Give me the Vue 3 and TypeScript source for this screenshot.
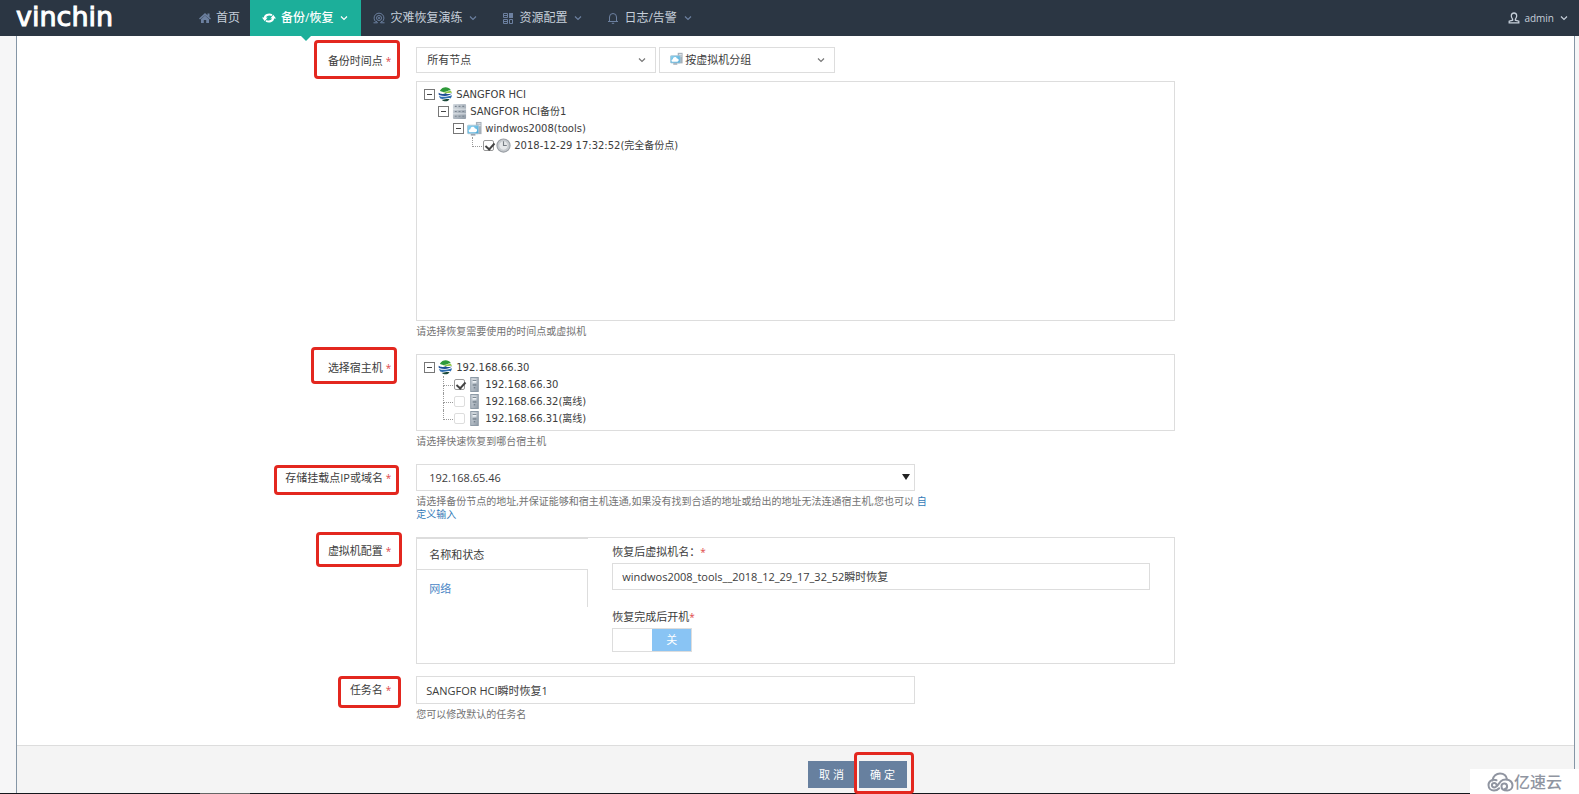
<script setup lang="ts">
import { ref } from 'vue'

interface NavItem {
  icon: string
  text: string
  active?: boolean
  menu?: boolean
}

interface TreeNode {
  level: number
  icon: string
  text: string
  open?: boolean
  checked?: boolean
  disabled?: boolean
  last?: boolean
}

const nav: NavItem[] = [
  { icon: 'home', text: '首页' },
  { icon: 'sync', text: '备份/恢复', active: true, menu: true },
  { icon: 'drill', text: '灾难恢复演练', menu: true },
  { icon: 'blocks', text: '资源配置', menu: true },
  { icon: 'bell', text: '日志/告警', menu: true },
]

const points = ref<TreeNode[]>([
  { level: 0, icon: 'globe', text: 'SANGFOR HCI', open: true },
  { level: 1, icon: 'rack', text: 'SANGFOR HCI备份1', open: true },
  { level: 2, icon: 'vm', text: 'windwos2008(tools)', open: true },
  { level: 3, icon: 'clock', text: '2018-12-29 17:32:52(完全备份点)', checked: true, last: true },
])

const hosts = ref<TreeNode[]>([
  { level: 0, icon: 'globe', text: '192.168.66.30', open: true },
  { level: 1, icon: 'server', text: '192.168.66.30', checked: true },
  { level: 1, icon: 'server', text: '192.168.66.32(离线)', checked: false, disabled: true },
  { level: 1, icon: 'server', text: '192.168.66.31(离线)', checked: false, disabled: true, last: true },
])

const vmName = ref('windwos2008_tools__2018_12_29_17_32_52瞬时恢复')
const taskName = ref('SANGFOR HCI瞬时恢复1')
const powerOn = ref(false)
const tab = ref('name')
</script>

<template>
  <div class="page">
    <svg class="defs" width="0" height="0" aria-hidden="true">
      <defs>
        <linearGradient id="metal" x1="0" y1="0" x2="1" y2="1">
          <stop offset="0" stop-color="#d5dbe1" />
          <stop offset="1" stop-color="#8f9aa6" />
        </linearGradient>
        <linearGradient id="sky" x1="0" y1="0" x2="1" y2="1">
          <stop offset="0" stop-color="#8fd3f0" />
          <stop offset="1" stop-color="#4aa8d8" />
        </linearGradient>
        <symbol id="home" viewBox="0 0 12 12">
          <path fill="currentColor" d="M6 1 12 6.500 11 7.500 6 3.200 1 7.500 0 6.500zM8.500 1.500h2v3.500l-2-1.800zM6 3.600l4 3.600V11H7.200V8H4.800v3H2V7.200z" />
        </symbol>
        <symbol id="sync" viewBox="0 0 14 12">
          <path fill="none" stroke="currentColor" stroke-width="2" d="M2.800 6.500C2.600 3.200 6.500 1.600 10 3.200M11.200 5.500c.2 3.300-3.700 4.900-7.200 3.300" />
          <path fill="currentColor" d="M0 5.500h5.600L2.800 9.200zM14 6.500H8.400l2.800-3.700z" />
        </symbol>
        <symbol id="drill" viewBox="0 0 12 12">
          <g fill="none" stroke="currentColor">
            <path d="M2.600 9.600a4.900 4.900 0 1 1 6.800 0M.5 10.800h4L3 9M11.500 10.800h-4L9 9" />
            <circle cx="6" cy="6" r="2.500" />
          </g>
          <circle cx="6" cy="6" r="1" fill="currentColor" />
        </symbol>
        <symbol id="blocks" viewBox="0 0 12 12">
          <path fill="none" stroke="currentColor" d="M1.500 1.500h4v4h-4zM1.500 7.500h4v4h-4zM7.500 7.500h3v4h-3z" />
          <path fill="currentColor" d="M7 1h4v5H7zM2 3h3v1H2zM2 9h3v1H2z" />
        </symbol>
        <symbol id="bell" viewBox="0 0 12 12">
          <path fill="none" stroke="currentColor" d="M1 9.500h10M2.500 9.500V5a3.500 3.500 0 0 1 7 0v4.500M4.800 11.300h2.400" />
        </symbol>
        <symbol id="user" viewBox="0 0 12 12">
          <path fill="none" stroke="currentColor" stroke-width="1.300" d="M4.600 7.200C2.400 4.600 3 1 6 1s3.600 3.600 1.400 6.200v1l3.400 1v1.600H1.200V9.200l3.400-1z" />
        </symbol>
        <symbol id="chevron" viewBox="0 0 8 8">
          <path fill="none" stroke="currentColor" stroke-width="1.200" d="M1 2.500 4 5.500 7 2.500" />
        </symbol>
        <symbol id="globe" viewBox="0 0 16 16">
          <path fill="#2f9a3a" d="M2 4C5-.8 11-.6 13.800 3.400 10.800 3 8.600 5.600 5.600 5.200 4.200 5 3 5 2 4z" />
          <path fill="#1d4f96" d="M.6 6.200C4.600 8.600 6.500 6.800 9 6.300c-1 1.200.3 1.700 6.200.7-4.500 3-8.500 3.200-14.300 1.400z" />
          <path fill="#8cc63f" d="M5 6c3.400.2 5.600-2.400 9-1.600l1 1.900C11.500 5.500 8.500 8 5 6z" />
          <path fill="#2d6db0" d="M1 9.600c4.600 1.800 8.200.6 14-.9-.3 1.300-.8 2.500-1.600 3.500C10 11 6.500 13.400 2.800 12.600 2 11.800 1.400 10.800 1 9.600z" />
          <path fill="#1c4a3a" d="M3.800 13.500c3 .6 5-1.300 8.500-.3C9.800 16 6.400 15.800 3.800 13.500z" />
        </symbol>
        <symbol id="rack" viewBox="0 0 16 16">
          <rect x="1" y="0" width="14" height="16" rx="1" fill="url(#metal)" />
          <path stroke="#eef1f4" stroke-width=".8" d="M1 5.500h14M1 10.500h14" />
          <path stroke="#7b8691" stroke-width="1.200" d="M3 2.500h2M7 2.500h2M11 2.500h2M3 8h2M7 8h2M11 8h2M3 13h2M7 13h2M11 13h2" />
        </symbol>
        <symbol id="vm" viewBox="0 0 16 16">
          <path fill="#a7b0b9" d="M9.500 1h6v13h-6z" />
          <path stroke="#eef1f4" d="M11 3h3.500M11 5h3.500" />
          <rect x=".5" y="4.500" width="12" height="9" rx="1" fill="url(#sky)" stroke="#a9c6d6" />
          <path fill="#fff" d="M3.500 12c-2.200 0-2.200-3 0-3.200C3.800 5.500 7.800 5.300 8.500 8c2.800-.4 3 3.800.4 4z" />
          <path fill="#8e99a4" d="M4 14h5v1.500H4z" />
        </symbol>
        <symbol id="clock" viewBox="0 0 16 16">
          <circle cx="8" cy="8" r="7" fill="#c9cdd1" stroke="#9a9fa5" stroke-width="1.200" />
          <circle cx="8" cy="8" r="5" fill="#e6e8ea" stroke="#b8bdc2" stroke-width=".7" />
          <path fill="none" stroke="#777d84" stroke-width="1.200" d="M8 3.500V8h3.500" />
        </symbol>
        <symbol id="server" viewBox="0 0 10 16">
          <rect x="1" y=".5" width="8" height="15" fill="url(#metal)" stroke="#8996a3" />
          <path fill="#eef2f5" d="M3 2h4v4H3z" />
          <path stroke="#596774" d="M3 3.500h4M3 8.500h4M4.200 11.500h1.600" />
        </symbol>
      </defs>
    </svg>

    <header class="topbar">
      <a class="logo" href="#">vinchin</a>
      <nav class="nav">
        <a v-for="item in nav" :key="item.text" href="#" class="nav-item" :class="{ active: item.active }">
          <svg class="nav-icon"><use :href="'#' + item.icon" /></svg>
          <span>{{ item.text }}</span>
          <svg v-if="item.menu" class="chev"><use href="#chevron" /></svg>
        </a>
      </nav>
      <button type="button" class="account">
        <svg class="nav-icon"><use href="#user" /></svg>
        <span>admin</span>
        <svg class="chev"><use href="#chevron" /></svg>
      </button>
    </header>

    <main class="panel">
      <form id="restore" class="form" @submit.prevent>
        <div class="row">
          <label class="label" for="node"><span>备份时间点 <i>*</i></span><b class="mark mark-point"></b></label>
          <div class="control">
            <div class="filters">
              <div class="select node">
                <select id="node"><option>所有节点</option></select>
                <svg class="arrow"><use href="#chevron" /></svg>
              </div>
              <div class="select group">
                <svg class="lead"><use href="#vm" /></svg>
                <select aria-label="分组"><option>按虚拟机分组</option></select>
                <svg class="arrow"><use href="#chevron" /></svg>
              </div>
            </div>
            <div class="tree tall">
              <div v-for="(n, i) in points" :key="i" class="tree-row" :class="['level-' + n.level, { last: n.last }]">
                <button v-if="n.open" type="button" class="toggle" aria-label="折叠"></button>
                <span v-else class="branch"></span>
                <label class="leaf">
                  <input v-if="!n.open" v-model="n.checked" type="checkbox" class="tick" :disabled="n.disabled" />
                  <svg class="tree-icon"><use :href="'#' + n.icon" /></svg>
                  <span>{{ n.text }}</span>
                </label>
              </div>
            </div>
            <p class="help">请选择恢复需要使用的时间点或虚拟机</p>
          </div>
        </div>

        <div class="row">
          <div class="label"><span>选择宿主机 <i>*</i></span><b class="mark mark-host"></b></div>
          <div class="control">
            <div class="tree">
              <div v-for="(n, i) in hosts" :key="i" class="tree-row" :class="['level-' + n.level, { last: n.last }]">
                <button v-if="n.open" type="button" class="toggle" aria-label="折叠"></button>
                <span v-else class="branch"></span>
                <label class="leaf">
                  <input v-if="!n.open" v-model="n.checked" type="checkbox" class="tick" :disabled="n.disabled" />
                  <svg class="tree-icon"><use :href="'#' + n.icon" /></svg>
                  <span>{{ n.text }}</span>
                </label>
              </div>
            </div>
            <p class="help">请选择快速恢复到哪台宿主机</p>
          </div>
        </div>

        <div class="row">
          <label class="label" for="mount"><span>存储挂载点IP或域名 <i>*</i></span><b class="mark mark-mount"></b></label>
          <div class="control">
            <div class="select mount">
              <select id="mount"><option>192.168.65.46</option></select>
              <span class="solid-arrow"></span>
            </div>
            <p class="help">请选择备份节点的地址,并保证能够和宿主机连通,如果没有找到合适的地址或给出的地址无法连通宿主机,您也可以 <a href="#">自<br />定义输入</a></p>
          </div>
        </div>

        <div class="row tight">
          <div class="label"><span>虚拟机配置 <i>*</i></span><b class="mark mark-vm"></b></div>
          <div class="control">
            <div class="config">
              <div class="tabs" role="tablist">
                <button type="button" role="tab" class="tab" :class="{ on: tab === 'name' }" @click="tab = 'name'">名称和状态</button>
                <button type="button" role="tab" class="tab" :class="{ on: tab === 'net' }" @click="tab = 'net'">网络</button>
              </div>
              <div class="fields">
                <label class="caption" for="vm-name">恢复后虚拟机名：<i>*</i></label>
                <input id="vm-name" v-model="vmName" type="text" class="text" />
                <label class="caption power" for="power">恢复完成后开机<i>*</i></label>
                <label class="switch">
                  <input id="power" v-model="powerOn" type="checkbox" role="switch" />
                  <span class="knob"></span>
                  <span class="state">关</span>
                </label>
              </div>
            </div>
          </div>
        </div>

        <div class="row">
          <label class="label" for="task"><span>任务名 <i>*</i></span><b class="mark mark-task"></b></label>
          <div class="control">
            <input id="task" v-model="taskName" type="text" class="text task" />
            <p class="help">您可以修改默认的任务名</p>
          </div>
        </div>
      </form>

      <footer class="actions">
        <button type="button" class="btn">取 消</button>
        <div class="confirm">
          <button type="submit" form="restore" class="btn">确 定</button>
          <b class="mark mark-ok"></b>
        </div>
      </footer>
    </main>
    <div class="edge"><span></span></div>

    <div class="watermark">
      <svg viewBox="0 0 27 20">
        <g fill="none" stroke="#9095a1" stroke-width="2" stroke-linecap="round">
          <path d="M5.500 8.500C6 4 9.500 1.500 13 1.500c3.600 0 6.400 2.300 7 5.800" />
          <path d="M9.500 13.300a2.300 2.300 0 1 0-2.300 2.200c3.600 0 4.600-6 8.800-7.600 4.500-1.500 9.500.8 9.500 5.300 0 3.300-2.500 5.300-5.300 5.300-4 0-5.700-2-5.700-4a2.800 2.800 0 1 1 3.300 2.500" />
          <path d="M9.500 8.300C5.500 6.800 1.500 9 1.500 13c0 3.300 2.500 5.500 5.500 5.500 2.500 0 4-1 5.200-2.300" />
        </g>
      </svg>
      <span>亿速云</span>
    </div>
  </div>
</template>

<style>
body {
  background: #f6f6f7;
}
</style>

<style scoped>
.page,
.page * {
  box-sizing: border-box;
}

.page {
  position: relative;
  display: flex;
  flex-direction: column;
  min-height: 100vh;
  overflow: hidden;
  color: #3c3c3c;
  font: 11px/17px "Open Sans", "Noto Sans CJK SC", sans-serif;
}

.page button,
.page input,
.page select {
  margin: 0;
  font: inherit;
  color: inherit;
}

.page i {
  color: #e0484a;
  font-size: 10px;
  font-style: normal;
}

.page a {
  text-decoration: none;
}

.defs {
  position: absolute;
}

.topbar {
  display: flex;
  align-items: stretch;
  height: 36px;
  background: #2b3643;
}

.logo {
  width: 175px;
  padding-left: 16px;
  color: #fff;
  font: 27px/33px "DejaVu Sans", sans-serif;
  -webkit-text-stroke: 1px #fff;
}

.nav {
  display: flex;
  flex: 1;
  padding-left: 13px;
}

.nav-item {
  position: relative;
  display: flex;
  align-items: center;
  gap: 5px;
  padding: 0 13px 0 12px;
  color: #c6cfda;
  font-size: 12px;
  line-height: 34px;
}

.nav-item:first-child {
  padding: 0 10px 0 11px;
}

.nav-icon {
  width: 12px;
  height: 12px;
  color: #6c80a0;
}

.chev {
  width: 8px;
  height: 8px;
  margin-left: 2px;
  color: #6c80a0;
}

.nav-item.active {
  background: #1caf9a;
  color: #fff;
  font-weight: 500;
}

.nav-item.active svg {
  color: #fff;
}

.nav-item.active .nav-icon {
  width: 14px;
}

.nav-item.active::after {
  content: "";
  position: absolute;
  top: 36px;
  left: 50%;
  margin-left: -5px;
  border: 5px solid transparent;
  border-top-color: #1caf9a;
  border-bottom: 0;
}

.account {
  display: flex;
  align-items: center;
  gap: 4px;
  padding: 0 11px;
  border: 0;
  background: none;
}

.page .account {
  font-size: 10px;
}

.page .account,
.account svg {
  color: #c6cfda;
}

.panel {
  display: flex;
  flex: 1;
  flex-direction: column;
  margin: 0 4px 0 16px;
  border: solid #8596a6;
  border-width: 0 1px;
  background: #fff;
}

.form {
  padding: 11px 0 24px;
}

.row {
  display: flex;
  margin-bottom: 16px;
}

.row.tight {
  margin-bottom: 12px;
}

.row:last-child {
  margin-bottom: 0;
}

.label {
  position: relative;
  flex: 0 0 25%;
  height: 28px;
  padding-right: 15px;
  line-height: 28px;
  text-align: right;
}

.mark {
  position: absolute;
  border: 3px solid #e3271f;
  border-radius: 4px;
  pointer-events: none;
}

.mark-point {
  top: -7px;
  right: 6px;
  width: 86px;
  height: 39px;
}

.mark-host {
  top: -7px;
  right: 9px;
  width: 86px;
  height: 37px;
}

.mark-mount {
  top: 1px;
  right: 7px;
  width: 125px;
  height: 30px;
}

.mark-vm {
  top: -5px;
  right: 4px;
  width: 86px;
  height: 35px;
}

.mark-task {
  top: 0;
  right: 5px;
  width: 63px;
  height: 32px;
}

.control {
  flex: 0 0 50%;
  min-width: 0;
  padding: 0 10px;
}

.filters {
  display: flex;
  gap: 3px;
  margin-bottom: 8px;
}

.select {
  position: relative;
}

.select select {
  display: block;
  width: 100%;
  height: 26px;
  padding: 0 10px 1px;
  border: 1px solid #ddd;
  border-radius: 0;
  background: #fff;
  appearance: none;
}

.select.node {
  width: 240px;
}

.select.group {
  width: 176px;
}

.select.group select {
  padding-left: 25px;
}

.select.mount,
.text.task {
  width: calc(66% - 2px);
}

.select.mount select {
  height: 27px;
  padding-left: 12px;
}

.lead {
  position: absolute;
  top: 5px;
  left: 11px;
  width: 13px;
  height: 13px;
}

.arrow {
  position: absolute;
  top: 9px;
  right: 10px;
  width: 8px;
  height: 8px;
  color: #777;
}

.solid-arrow {
  position: absolute;
  top: 10px;
  right: 5px;
  border: 4px solid transparent;
  border-top: 6px solid #222;
  border-bottom: 0;
}

.tree {
  padding: 4px 7px 3px;
  border: 1px solid #ddd;
  font: 10px/17px "DejaVu Sans", "Noto Sans CJK SC", sans-serif;
}

.tree.tall {
  height: 240px;
}

.tree-row {
  display: flex;
  align-items: center;
  height: 17px;
}

.level-1 {
  padding-left: 14px;
}

.level-2 {
  padding-left: 29px;
}

.level-3 {
  padding-left: 43px;
}

.toggle {
  width: 11px;
  height: 11px;
  padding: 0;
  border: 1px solid #777;
  background: linear-gradient(#444, #444) center / 5px 1px no-repeat #fff;
}

.branch {
  position: relative;
  align-self: stretch;
  width: 11px;
  margin-left: 5px;
}

.branch::before {
  content: "";
  position: absolute;
  top: 0;
  left: 0;
  width: 9px;
  height: 9px;
  border: dotted #999;
  border-width: 0 0 1px 1px;
}

.tree-row:not(.last) .branch::after {
  content: "";
  position: absolute;
  top: 9px;
  bottom: 0;
  left: 0;
  border-left: 1px dotted #999;
}

.leaf {
  display: flex;
  align-items: center;
  gap: 3px;
  margin-left: 3px;
  white-space: nowrap;
}

.branch + .leaf {
  gap: 2px;
  margin-left: 0;
}

.tree-icon {
  width: 15px;
  height: 15px;
}

.branch + .leaf span {
  margin-left: 1px;
}

.tick {
  position: relative;
  width: 11px;
  height: 11px;
  border: 1px solid #999;
  border-radius: 2px;
  background: #fff;
  appearance: none;
}

.tick:disabled {
  border-color: #ddd;
}

.tick:checked::after {
  content: "";
  position: absolute;
  top: 0;
  left: 3px;
  width: 4px;
  height: 7px;
  border: solid #444;
  border-width: 0 2px 2px 0;
  transform: rotate(42deg);
}

.help {
  margin: 4px 0 0;
  color: #737373;
  font-size: 10px;
  line-height: 13px;
  white-space: nowrap;
}

.help a {
  color: #337ab7;
}

.config {
  display: flex;
  height: 127px;
  border: 1px solid #ddd;
}

.tabs {
  width: 171px;
}

.tab {
  display: block;
  width: 100%;
  height: 37px;
  padding: 0 12px;
  border: 0;
  border-right: 1px solid #ddd;
  background: none;
  text-align: left;
}

.page .tab:not(.on) {
  color: #4a86c5;
}

.tab.on {
  height: 32px;
  border-right: 0;
  border-top: 1px solid #ddd;
  border-bottom: 1px solid #ddd;
}

.fields {
  flex: 1;
  min-width: 0;
  padding: 4px 24px 0;
}

.caption {
  display: block;
  height: 20px;
  margin-bottom: 1px;
  line-height: 20px;
}

.caption.power {
  margin: 17px 0 1px;
}

.text {
  display: block;
  width: 100%;
  height: 27px;
  padding: 0 9px 1px;
  border: 1px solid #ddd;
  border-radius: 0;
  background: #fff;
}

.text.task {
  height: 28px;
}

.switch {
  position: relative;
  display: flex;
  width: 80px;
  height: 24px;
  border: 1px solid #ddd;
}

.switch input {
  position: absolute;
  opacity: 0;
}

.knob,
.state {
  flex: 1;
}

.state {
  background: #89c4f4;
  color: #fff;
  line-height: 22px;
  text-align: center;
}

.actions {
  display: flex;
  flex: 1;
  align-items: flex-start;
  gap: 3px;
  padding: 15px 0 5px calc(50% + 12px);
  border-top: 1px solid #ddd;
  background: #f4f4f4;
}

.btn {
  display: block;
  width: 48px;
  height: 27px;
  padding: 0;
  border: 0;
  background: #67809f;
}

.page .btn {
  color: #fff;
}

.confirm {
  position: relative;
}

.mark-ok {
  top: -9px;
  left: -5px;
  z-index: 1;
  width: 60px;
  height: 42px;
}

.edge {
  height: 1px;
  padding-left: 200px;
  background: #15171c;
}

.edge span {
  display: block;
  width: 50px;
  height: 1px;
  background: #666;
}

.watermark {
  position: absolute;
  right: 0;
  bottom: 0;
  display: flex;
  align-items: center;
  width: 109px;
  height: 25px;
  padding-left: 17px;
  background: #fff;
  color: #9095a1;
  font: 500 16px/25px "Noto Sans CJK SC", sans-serif;
}

.watermark svg {
  width: 27px;
  height: 20px;
}
</style>
